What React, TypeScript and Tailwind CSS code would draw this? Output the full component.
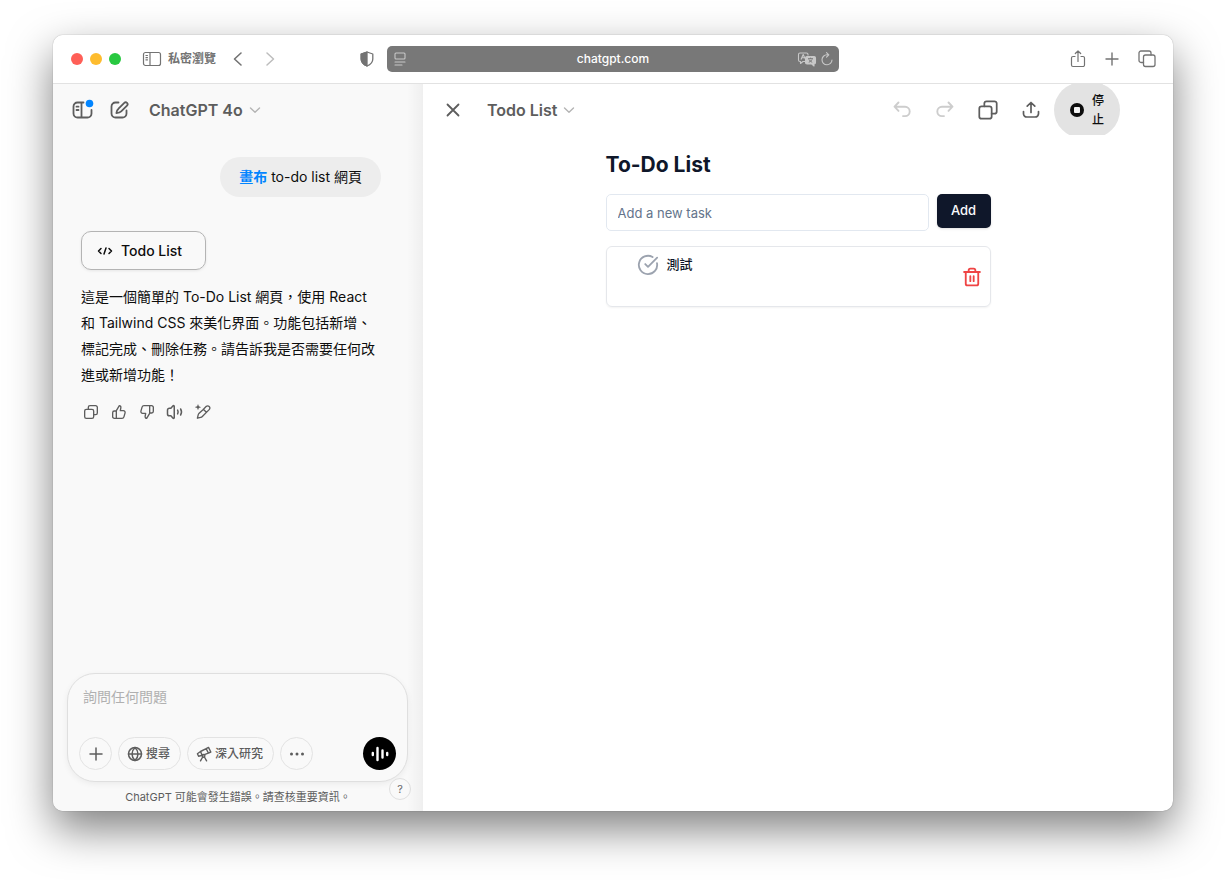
import type { ReactNode } from "react";
import { useState, type FormEvent } from "react";

type IconProps = {
  children: ReactNode;
  className?: string;
  box?: number;
  stroke?: number;
};

function Icon({ children, className = "size-5", box = 24, stroke = 2 }: IconProps) {
  return (
    <svg
      aria-hidden="true"
      className={`shrink-0 ${className}`}
      viewBox={`0 0 ${box} ${box}`}
      fill="none"
      stroke="currentColor"
      strokeWidth={stroke}
      strokeLinecap="round"
      strokeLinejoin="round"
    >
      {children}
    </svg>
  );
}

function ChevronDown() {
  return (
    <Icon className="size-3 text-[#b4b4b4]" box={12} stroke={1.4}>
      <path d="M1.5 4l4.5 4.2L10.5 4" />
    </Icon>
  );
}

function CopyIcon({ className, stroke = 2 }: { className: string; stroke?: number }) {
  return (
    <Icon className={className} stroke={stroke}>
      <rect x="2.5" y="8" width="13.5" height="13.5" rx="2.5" />
      <path d="M8 8V5a2.5 2.5 0 0 1 2.5-2.5H19A2.5 2.5 0 0 1 21.5 5v8.5A2.5 2.5 0 0 1 19 16h-3" />
    </Icon>
  );
}

function TitleBar() {
  return (
    <header className="grid h-[49px] shrink-0 grid-cols-[1fr_452px_1fr] items-center border-b border-[#e2e2e2] bg-white text-[#737373]">
      <div className="flex items-center pl-[18px]">
        <div className="flex gap-[7px]">
          <span className="size-3 rounded-full bg-[#ff5f57]" />
          <span className="size-3 rounded-full bg-[#febc2e]" />
          <span className="size-3 rounded-full bg-[#28c840]" />
        </div>
        <button type="button" className="ml-[21px] flex items-center gap-[6px] text-xs font-bold">
          <svg aria-hidden="true" className="h-4 w-5" viewBox="0 0 20 16" fill="none" stroke="currentColor" strokeWidth="1.2">
            <rect x="1.5" y="1.5" width="17" height="13" rx="2" />
            <path d="M8 1.5v13M3.5 4.5h2.4M3.5 6.7h2.4M3.500 8.900h2.400" />
          </svg>
          私密瀏覽
        </button>
        <button type="button" aria-label="返回" className="ml-[14px]">
          <Icon className="size-4" box={16} stroke={1.6}>
            <path d="M11 2L4.500 8l6.500 6" />
          </Icon>
        </button>
        <button type="button" aria-label="前進" className="ml-4 text-[#bdbdbd]">
          <Icon className="size-4" box={16} stroke={1.5}>
            <path d="M5 2l6.500 6L5 14" />
          </Icon>
        </button>
        <button type="button" aria-label="隱私權報告" className="mr-3 ml-auto">
          <Icon className="size-4" box={16} stroke={1.3}>
            <path d="M8 1L13.800 3v5c0 3.200-2.400 5.600-5.800 7-3.400-1.400-5.800-3.800-5.800-7V3z" />
            <path d="M8 1v14C4.600 13.600 2.200 11.200 2.200 8V3z" fill="currentColor" />
          </Icon>
        </button>
      </div>

      <div className="flex h-[26px] items-center rounded-[5px] bg-[#787878] px-[5px] text-[#c8c8c8]">
        <div className="flex flex-1">
          <Icon className="size-4" box={16} stroke={1.1}>
            <rect x="3" y="2" width="10" height="6" rx="1" />
            <path d="M3 11h10M3 14h7" />
          </Icon>
        </div>
        <span className="text-xs font-medium text-white">chatgpt.com</span>
        <div className="flex flex-1 items-center justify-end gap-[3px]">
          <svg aria-hidden="true" className="h-4 w-5" viewBox="0 0 20 16" fill="none" stroke="currentColor" strokeWidth="1.1" strokeLinejoin="round">
            <path d="M8.500 10.500H6l-2.500 2v-2H3A1.500 1.500 0 0 1 1.500 9V3.500A1.500 1.500 0 0 1 3 2h6.500A1.500 1.500 0 0 1 11 3.500v1" />
            <path d="M4 8.500l2.200-5 1.800 4M4.800 6.800h2.800" />
            <path d="M10 5.500h7A1.500 1.500 0 0 1 18.500 7v4.500A1.500 1.500 0 0 1 17 13v2l-2.200-2H10a1.500 1.500 0 0 1-1.500-1.500V7A1.500 1.500 0 0 1 10 5.500z" fill="currentColor" />
            <path d="M11 7.700h5M13.500 6.700v1M12 8.500c.8 1.400 1.800 2.200 3.200 2.800M15 8.500c-.8 1.400-1.800 2.200-3.200 2.800" stroke="#787878" strokeWidth="1" />
          </svg>
          <button type="button" aria-label="重新載入">
            <Icon className="size-[14px]" box={14} stroke={1.1}>
              <path d="M12 8a5 5 0 1 1-5-5.200h1.500M6.500.6l2.300 2.200-2.300 2.300" />
            </Icon>
          </button>
        </div>
      </div>

      <div className="flex items-center justify-end gap-[17px] pr-4">
        <button type="button" aria-label="分享">
          <Icon className="size-[18px]" box={18} stroke={1.2}>
            <path d="M6 6.500H4A1.500 1.500 0 0 0 2.500 8v7A1.500 1.500 0 0 0 4 16.500h10a1.500 1.500 0 0 0 1.500-1.500V8A1.500 1.500 0 0 0 14 6.500h-2M9 11.500V1M6.300 3.500L9 1l2.700 2.500" />
          </Icon>
        </button>
        <button type="button" aria-label="新增標籤頁">
          <Icon className="size-4" box={16} stroke={1.4}>
            <path d="M8 2v12M2 8h12" />
          </Icon>
        </button>
        <button type="button" aria-label="標籤頁概覽">
          <Icon className="size-5" box={20} stroke={1.3}>
            <rect x="6.500" y="6" width="11.500" height="11.500" rx="2" />
            <path d="M6.500 13.500H4a2 2 0 0 1-2-2V4a2 2 0 0 1 2-2h8a2 2 0 0 1 2 2v2" />
          </Icon>
        </button>
      </div>
    </header>
  );
}

function MessageActions() {
  return (
    <div className="mt-[10px] -ml-1 flex text-[#5d5d5d]">
      <button type="button" aria-label="複製" className="flex size-7 items-center justify-center">
        <CopyIcon className="size-4" />
      </button>
      <button type="button" aria-label="回應良好" className="flex size-7 items-center justify-center">
        <Icon className="size-4">
          <path d="M12.500 2.500L8 10v11.500h8.500a3 3 0 0 0 2.900-2.200l1.700-6A2.600 2.600 0 0 0 18.600 10H14l.8-4.600c.2-1.500-.8-2.900-2.300-2.900zM8 10.500H5A2.500 2.500 0 0 0 2.500 13v6A2.500 2.500 0 0 0 5 21.500h3" />
        </Icon>
      </button>
      <button type="button" aria-label="回應不佳" className="flex size-7 items-center justify-center">
        <Icon className="size-4">
          <path d="M11.500 21.500L16 14V2.500H7.500a3 3 0 0 0-2.900 2.200l-1.700 6A2.600 2.600 0 0 0 5.400 14H10l-.8 4.600c-.2 1.500.8 2.900 2.300 2.900zM16 2.500h3A2.500 2.500 0 0 1 21.500 5v6a2.500 2.500 0 0 1-2.500 2.500h-3" />
        </Icon>
      </button>
      <button type="button" aria-label="大聲朗讀" className="flex size-7 items-center justify-center">
        <Icon className="size-[18px]">
          <path d="M11 4.500v15c0 .9-1 1.300-1.600.7L6.500 17H4.500A2.500 2.500 0 0 1 2 14.500v-5A2.500 2.500 0 0 1 4.500 7h2l2.900-3.200c.6-.6 1.600-.2 1.600.7zM15.500 9.500c.8 1.500.8 3.500 0 5M19.500 8c1.500 2.500 1.500 5.500 0 8" />
        </Icon>
      </button>
      <button type="button" aria-label="在畫布中編輯" className="flex size-7 items-center justify-center">
        <Icon className="size-4">
          <path d="M12 8.500l5-5a3.300 3.300 0 0 1 4.600 4.600L11 18.700a5 5 0 0 1-2.500 1.400l-4.900 1.200 1.200-4.900a5 5 0 0 1 1.400-2.500zM12.500 8l4.500 4.500" />
          <path d="M4.500 0l1.300 3.400L9.200 4.700 5.800 6 4.500 9.400 3.200 6-.2 4.700l3.400-1.300z" fill="currentColor" stroke="none" />
        </Icon>
      </button>
    </div>
  );
}

function Composer() {
  const pill =
    "flex h-[33px] items-center justify-center rounded-full border border-[#e3e3e3] text-[#5d5d5d]";

  return (
    <div className="relative pr-[15px] pl-[14px]">
      <form
        onSubmit={(e) => e.preventDefault()}
        className="rounded-[28px] border border-[#dfdfdf] bg-[#f9f9f9] px-[11px] pt-[11px] pb-[11px] shadow-[0_2px_6px_rgba(0,0,0,0.06)]"
      >
        <textarea
          aria-label="詢問任何問題"
          placeholder="詢問任何問題"
          rows={1}
          className="block h-[52px] w-full resize-none bg-transparent px-1 text-sm leading-6 text-[#0d0d0d] outline-none placeholder:text-[#b0b0b0]"
        />
        <div className="flex gap-[6px]">
          <button type="button" aria-label="新增" className={`${pill} w-[33px]`}>
            <Icon className="size-4" box={16} stroke={1.5}>
              <path d="M8 2v12M2 8h12" />
            </Icon>
          </button>
          <button type="button" className={`${pill} gap-[3px] pr-[10px] pl-2 text-xs font-medium`}>
            <Icon className="size-4" box={16} stroke={1.5}>
              <circle cx="8" cy="8" r="6.500" />
              <path d="M1.500 8h13M8 1.500c-4 3.800-4 9.200 0 13 4-3.800 4-9.200 0-13z" />
            </Icon>
            搜尋
          </button>
          <button type="button" className={`${pill} gap-[3px] pr-[10px] pl-2 text-xs font-medium`}>
            <Icon className="size-4" box={16} stroke={1.4}>
              <path d="M10.200 2.700l2.300-1.300 2.300 4.600-2.400 1.100zM4.500 5.500l5.700-2.800 2.200 4.400-6.200 2.200zM1.400 7.800l3.100-2.300 1.700 3.800-3.600.9z" />
              <circle cx="7.500" cy="9.800" r="1.400" />
              <path d="M6.700 11l-2.200 3.800M8.400 11l2.200 3.800" />
            </Icon>
            深入研究
          </button>
          <button type="button" aria-label="更多" className={`${pill} w-[33px]`}>
            <Icon className="size-4" box={16} stroke={0}>
              <g fill="currentColor">
                <circle cx="2.500" cy="8" r="1.500" />
                <circle cx="8" cy="8" r="1.500" />
                <circle cx="13.500" cy="8" r="1.500" />
              </g>
            </Icon>
          </button>
          <button
            type="button"
            aria-label="語音模式"
            className="ml-auto flex size-[33px] items-center justify-center rounded-full bg-black text-white"
          >
            <Icon className="size-[18px]" box={18} stroke={2.4}>
              <path d="M1.800 8v2M6.500 3v12M11.500 5.500v7M16.200 8v2" />
            </Icon>
          </button>
        </div>
      </form>
      <button
        type="button"
        aria-label="說明"
        className="absolute right-3 -bottom-[18px] size-[22px] rounded-full border border-[#e0e0e0] bg-[#f9f9f9] text-[11px] leading-5 text-[#6b6b6b]"
      >
        ?
      </button>
    </div>
  );
}

function ChatPanel() {
  return (
    <aside className="relative flex w-[370px] shrink-0 flex-col bg-[#f9f9f9] text-[#0d0d0d]">
      <div className="flex h-[51px] shrink-0 items-center pl-[18px] text-[#5d5d5d]">
        <button type="button" aria-label="開啟側邊欄">
          <svg aria-hidden="true" className="size-6" viewBox="0 0 24 24" fill="none" stroke="currentColor" strokeWidth="1.8" strokeLinecap="round">
            <path d="M12.500 4.500h-6a4 4 0 0 0-4 4v7a4 4 0 0 0 4 4h10a4 4 0 0 0 4-4V12M10.500 4.500v15M5.500 8.700h2M5.500 12h2" />
            <circle cx="18.500" cy="5.500" r="3.800" fill="#0285ff" stroke="none" />
          </svg>
        </button>
        <button type="button" aria-label="新聊天" className="ml-[14px]">
          <Icon className="size-5" box={20} stroke={1.8}>
            <path d="M9.500 2.500h-3a4 4 0 0 0-4 4v7a4 4 0 0 0 4 4h7a4 4 0 0 0 4-4v-3" />
            <path d="M9.500 8.700l5.800-5.800a1.900 1.900 0 0 1 2.700 2.700l-5.800 5.800c-1 1-2.400 1.500-4.800 1.700.2-2.200.9-3.400 2.100-4.400z" />
          </Icon>
        </button>
        <button type="button" className="ml-5 flex items-center gap-[6px] font-semibold">
          ChatGPT 4o
          <ChevronDown />
        </button>
      </div>

      <main className="flex-1 pt-[22px] pr-[42px] pl-7 text-sm">
        <div className="flex justify-end">
          <p className="rounded-full bg-[#ededed] px-[19px] py-2 leading-6">
            <span className="font-semibold text-[#0285ff]">畫布</span> to-do list 網頁
          </p>
        </div>
        <button
          type="button"
          className="mt-[34px] flex h-[39px] items-center gap-2 rounded-[10px] border border-[#b4b4b4] pr-[23px] pl-[15px] font-medium shadow-[0_1px_3px_rgba(0,0,0,0.08)]"
        >
          <Icon className="size-4" box={16} stroke={1.5}>
            <path d="M4 5.500L1.500 8 4 10.500M12 5.500L14.500 8 12 10.500M9 5l-2 6" />
          </Icon>
          Todo List
        </button>
        <p className="mt-[14px] leading-[26px]">
          這是一個簡單的 To-Do List 網頁，使用 React 和 Tailwind CSS
          來美化界面。功能包括新增、標記完成、刪除任務。請告訴我是否需要任何改進或新增功能！
        </p>
        <MessageActions />
      </main>

      <Composer />
      <p className="pt-[5px] pb-1 text-center text-[11px] leading-5 text-[#5d5d5d]">
        ChatGPT 可能會發生錯誤。請查核重要資訊。
      </p>
      <div className="pointer-events-none absolute inset-y-0 right-0 w-4 bg-linear-to-r from-transparent to-black/4" />
    </aside>
  );
}

function CanvasHeader() {
  const tool = "flex w-[43px] justify-center";

  return (
    <div className="flex h-[51px] shrink-0 items-center overflow-hidden pr-[53px] pl-[21px] text-[#5d5d5d]">
      <button type="button" aria-label="關閉">
        <Icon className="size-[18px]" box={18} stroke={1.8}>
          <path d="M3.500 3.500l11 11M14.500 3.500l-11 11" />
        </Icon>
      </button>
      <button type="button" className="ml-[25px] flex items-center gap-[6px] font-semibold">
        Todo List
        <ChevronDown />
      </button>
      <div className="ml-auto flex items-center">
        <button type="button" aria-label="復原" disabled className={`${tool} text-[#cdcdcd]`}>
          <Icon className="size-5" box={20} stroke={1.9}>
            <path d="M6.500 2.500l-4 4.200 4 4.200M2.700 6.700H13a4.700 4.700 0 0 1 0 9.400h-2" />
          </Icon>
        </button>
        <button type="button" aria-label="重做" disabled className={`${tool} text-[#cdcdcd]`}>
          <Icon className="size-5" box={20} stroke={1.9}>
            <path d="M13.500 2.500l4 4.200-4 4.200M17.300 6.700H7a4.700 4.700 0 0 0 0 9.400h2" />
          </Icon>
        </button>
        <button type="button" aria-label="複製" className={tool}>
          <CopyIcon className="size-[22px]" stroke={1.9} />
        </button>
        <button type="button" aria-label="分享" className={tool}>
          <Icon className="size-5" box={20} stroke={1.7}>
            <path d="M2.500 11.500v2.200a3.300 3.300 0 0 0 3.300 3.300h8.400a3.300 3.300 0 0 0 3.300-3.300v-2.200M10 12.500v-10M6.200 6.200L10 2.500l3.800 3.700" />
          </Icon>
        </button>
        <button
          type="button"
          className="ml-[2px] flex h-14 w-[66px] items-center gap-2 rounded-full bg-[#e3e3e3] pl-4 text-xs leading-[19px] font-medium text-[#0d0d0d]"
        >
          <svg aria-hidden="true" className="size-[14px] shrink-0" viewBox="0 0 14 14">
            <circle cx="7" cy="7" r="7" fill="currentColor" />
            <rect x="4" y="4" width="6" height="6" rx="1" fill="#f3f3f3" />
          </svg>
          <span className="w-3">停止</span>
        </button>
      </div>
    </div>
  );
}

function TodoApp() {
  const [tasks, setTasks] = useState(["測試"]);
  const [draft, setDraft] = useState("");

  function handleAdd(e: FormEvent) {
    e.preventDefault();
    if (!draft.trim()) return;
    setTasks((t) => [...t, draft.trim()]);
    setDraft("");
  }

  return (
    <div className="mx-auto w-full max-w-[385px] pt-[14px] text-[#0f172a]">
      <h1 className="text-[21px] leading-8 font-bold">To-Do List</h1>
      <form onSubmit={handleAdd} className="mt-[13px] flex items-start gap-2">
        <input
          aria-label="Add a new task"
          placeholder="Add a new task"
          value={draft}
          onChange={(e) => setDraft(e.target.value)}
          className="h-[37px] min-w-0 flex-1 rounded-[5px] border border-[#e2e8f0] px-[11px] text-[13px] outline-none placeholder:text-[#64748b]"
        />
        <button
          type="submit"
          className="h-[34px] w-[54px] rounded-[5px] bg-[#0f172a] text-[13px] font-medium text-[#f8fafc] shadow-sm"
        >
          Add
        </button>
      </form>
      <ul className="mt-[15px] space-y-2">
        {tasks.map((task, i) => (
          <li
            key={i}
            className="flex h-[61px] items-center justify-between rounded-[6px] border border-[#e5e7eb] pr-2 pl-[30px] shadow-xs"
          >
            <button type="button" className="flex items-center gap-2 self-start pt-[7px] text-[13px] font-medium">
              <Icon className="size-[22px] text-[#9ca3af]">
                <path d="M21.800 10A10 10 0 1 1 17 3.300" />
                <path d="M9 11l3 3L22 4" />
              </Icon>
              {task}
            </button>
            <button
              type="button"
              aria-label="Delete"
              onClick={() => setTasks((t) => t.filter((_, n) => n !== i))}
              className="text-[#ef4444]"
            >
              <Icon className="size-5" stroke={2.2}>
                <path d="M2.500 6h19M19.500 6v14a2 2 0 0 1-2 2h-11a2 2 0 0 1-2-2V6M8 6V4a2 2 0 0 1 2-2h4a2 2 0 0 1 2 2v2M10 11v6M14 11v6" />
              </Icon>
            </button>
          </li>
        ))}
      </ul>
    </div>
  );
}

export default function App() {
  return (
    <div className="flex min-h-screen bg-white px-[53px] pt-[35px] pb-[69px] font-['Inter','Noto_Sans_CJK_TC',sans-serif]">
      <div className="flex flex-1 flex-col overflow-hidden rounded-[10px] bg-white shadow-[0_0_1px_rgba(0,0,0,0.5),0_18px_44px_rgba(0,0,0,0.5)]">
        <TitleBar />
        <div className="flex flex-1">
          <ChatPanel />
          <section className="flex min-w-0 flex-1 flex-col">
            <CanvasHeader />
            <TodoApp />
          </section>
        </div>
      </div>
    </div>
  );
}
